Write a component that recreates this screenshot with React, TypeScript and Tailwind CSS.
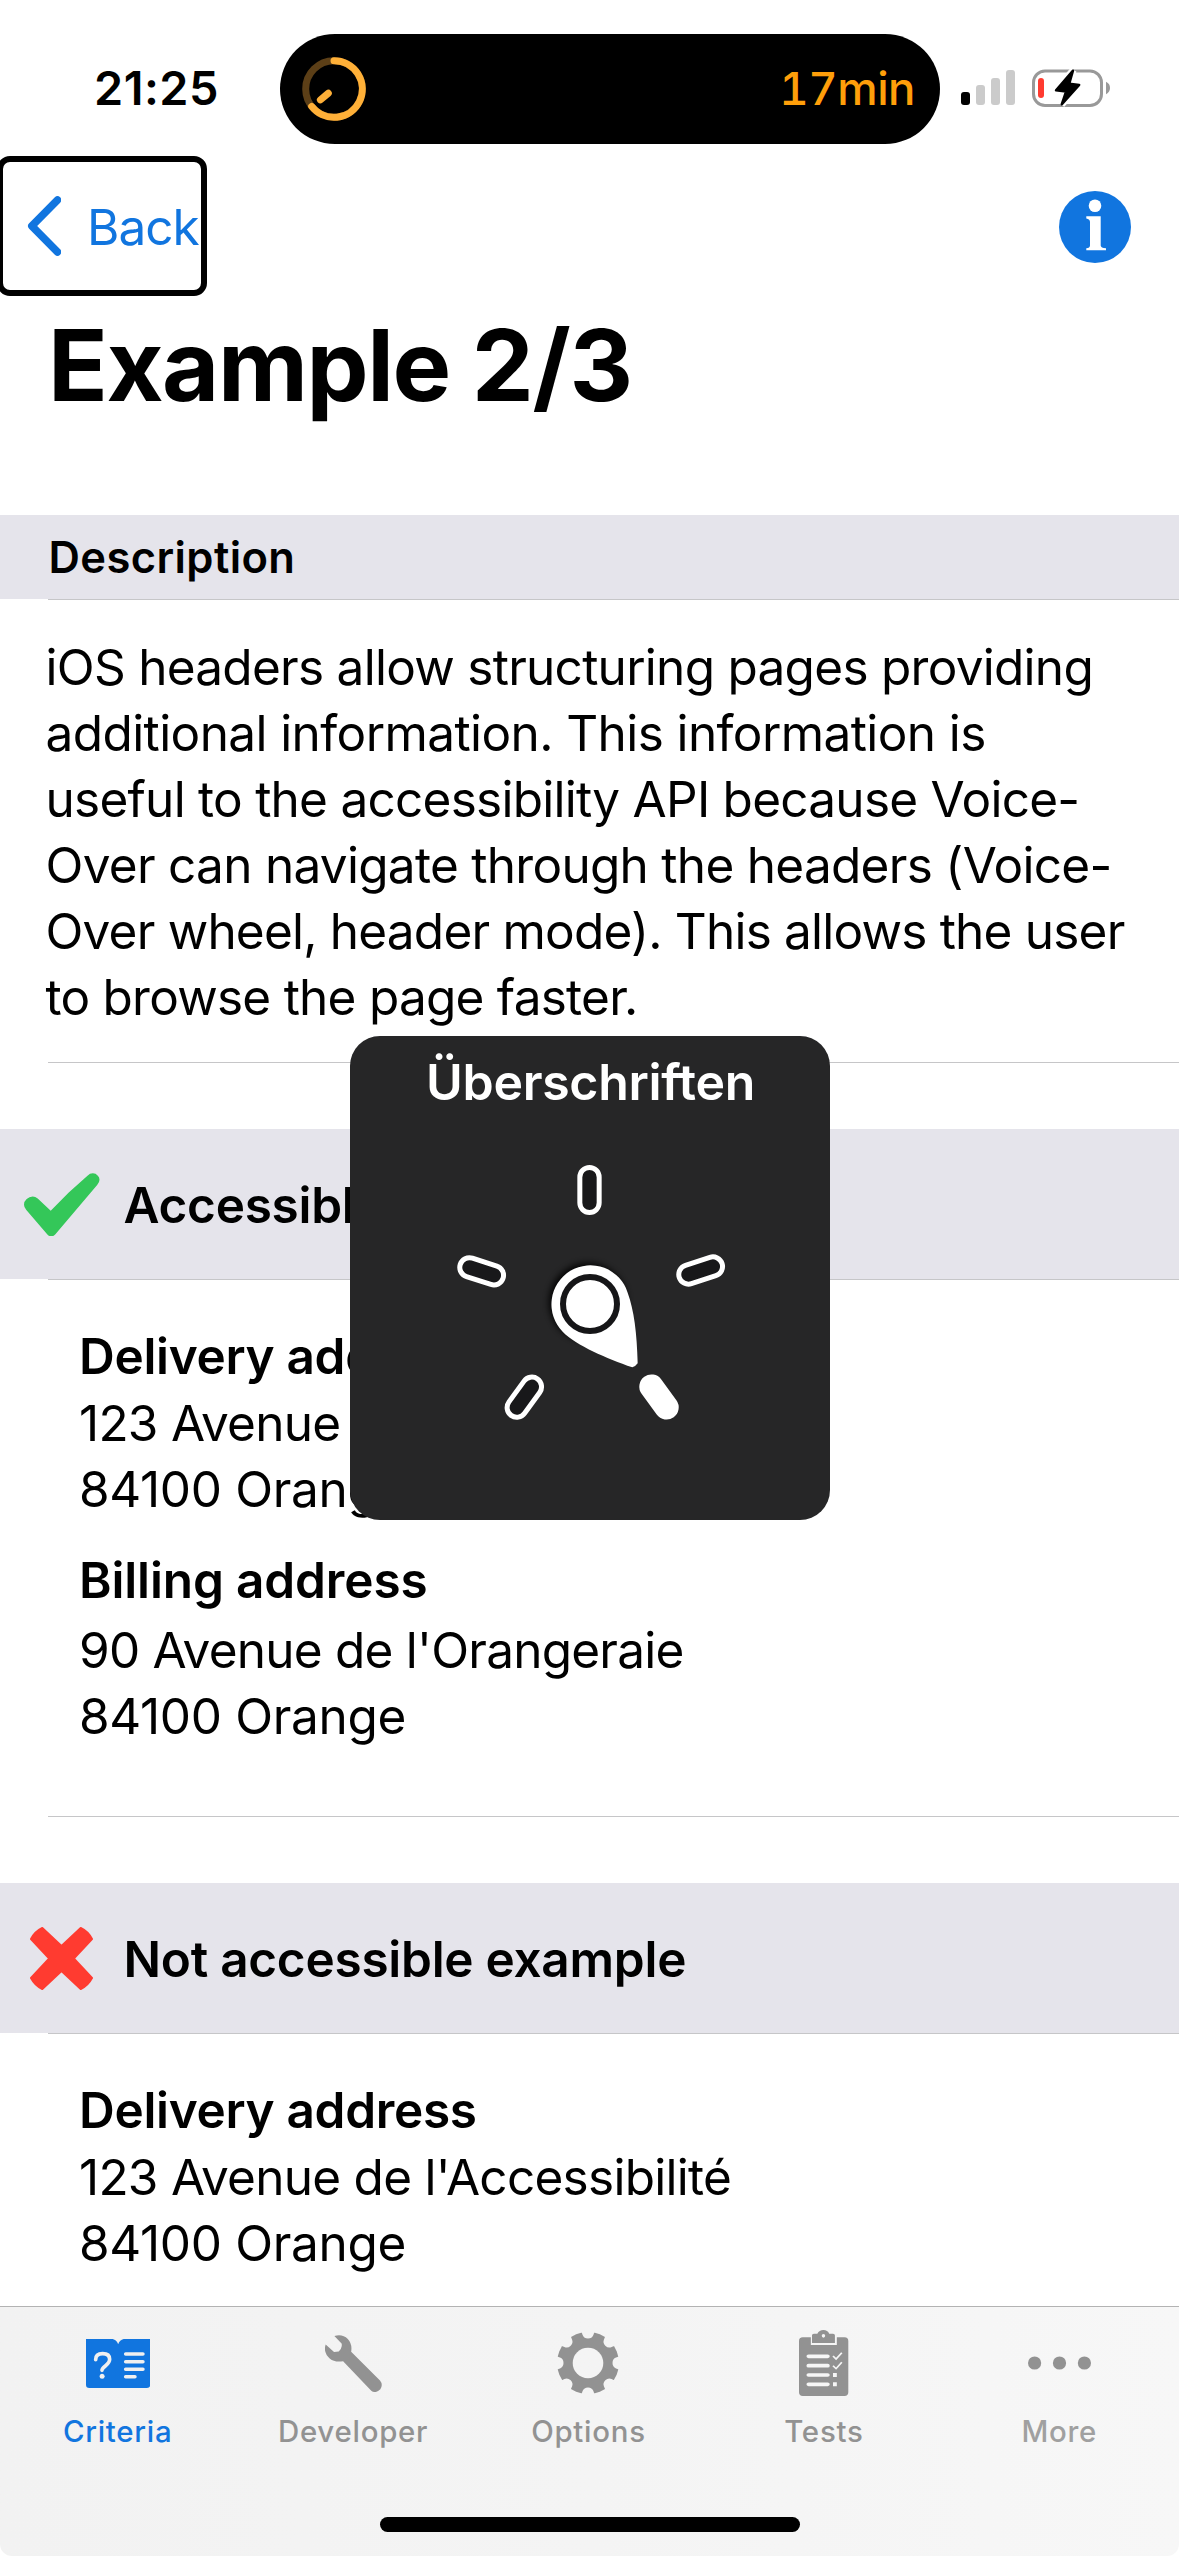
import React from 'react';

function TimerRing() {
  return (
    <svg width="66" height="66" viewBox="0 0 66 66" fill="none" strokeLinecap="round">
      <circle cx="33" cy="33" r="28.3" stroke="#5c3f17" strokeWidth="7" />
      <path d="M33 4.7A28.3 28.3 0 1 1 10.7 50.4" stroke="#ffb038" strokeWidth="7" />
      <path d="M27.3 37.3L19.4 43.9" stroke="#ffb038" strokeWidth="7" />
    </svg>
  );
}

function Signal() {
  return (
    <svg width="54" height="35" viewBox="0 0 54 35">
      <rect x="0" y="22" width="9" height="13" rx="3" fill="#000" />
      <rect x="15" y="15" width="9" height="20" rx="3" fill="#cbcbcb" />
      <rect x="30" y="8" width="9" height="27" rx="3" fill="#cbcbcb" />
      <rect x="45" y="0" width="9" height="35" rx="3" fill="#cbcbcb" />
    </svg>
  );
}

function Battery() {
  const bolt = 'M41 1.6L24 21.3L34 22.6L29.7 35.4L47.2 16L37.3 14.6Z';
  return (
    <svg width="78" height="39" viewBox="0 0 78 39" className="overflow-visible">
      <rect x="1.5" y="2" width="68" height="34.5" rx="11.5" fill="none" stroke="#999" strokeWidth="3" />
      <path d="M74 12.8V25.2C76.8 24 78 21.5 78 19C78 16.5 76.8 14 74 12.8Z" fill="#999" />
      <rect x="6" y="9" width="6" height="20" rx="3" fill="#ff3b30" />
      <path d={bolt} fill="#fff" stroke="#fff" strokeWidth="7" />
      <path d={bolt} fill="#000" stroke="#000" strokeWidth="2.4" strokeLinejoin="round" />
    </svg>
  );
}

function InfoIcon() {
  return (
    <svg width="72" height="72" viewBox="0 0 72 72">
      <circle cx="36" cy="36" r="36" fill="#1175df" />
      <circle cx="36" cy="14.8" r="6.3" fill="#fff" />
      <path d="M27.3 25.3H41.7V54.5Q41.7 57 47 57.3V59.2H27.3V57.3Q31 57 31 54.5V31Q31 28 27.3 27.5Z" fill="#fff" />
    </svg>
  );
}

function CheckIcon() {
  return (
    <svg width="75.5" height="63.5" viewBox="72 218 226 190" fill="#34c759">
      <path d="M98 288Q106 288 113 294L152 331L206 276L262 226Q269 219 278 219Q287 219 293 226Q298 231 298 238Q298 246 291 254L166 401Q160 408 154 408Q148 408 142 402L79 329Q72 321 72 313Q72 303 80 296Q88 288 98 288Z" />
    </svg>
  );
}

function CrossIcon() {
  return (
    <svg width="63" height="63" viewBox="0 0 63 63" fill="#ff3b30" stroke="#ff3b30" strokeWidth="2" strokeLinejoin="round" className="mr-px">
      <path d="M12.3 1L31.5 19L50.7 1Q58 4.5 62 12L43.8 31.5L62 51Q58 58.5 50.7 62L31.5 44L12.3 62Q5 58.5 1 51L19.2 31.5L1 12Q5 4.5 12.3 1Z" />
    </svg>
  );
}

function BookIcon() {
  return (
    <svg width="64.3" height="49" viewBox="0 0 193 147">
      <path d="M0 0H80Q92 3 96.5 16Q101 3 113 0H193V137Q193 147 183 147H10Q0 147 0 137Z" fill="#1175df" />
      <g stroke="#f0f0f0" fill="none" strokeLinecap="round">
        <path d="M29 62Q29 44 50 44Q71 44 71 61Q71 71 58 81Q48 89 48 94" strokeWidth="11" />
        <path d="M119 45H171M119 68H171M119 90.5H171M119 113H147" strokeWidth="10.5" />
      </g>
      <circle cx="48.5" cy="112" r="7.5" fill="#f0f0f0" />
    </svg>
  );
}

function WrenchIcon() {
  return (
    <svg width="57" height="57" viewBox="0 0 170 170" fill="#929292">
      <path d="M28 3Q52 -4 68 12Q82 27 78 50L164 136Q174 148 165 162Q152 176 138 166L54 78Q30 83 14 70Q-6 52 2 28L27 51L41 49Q49 42 50 33L50 26Z" />
    </svg>
  );
}

function GearIcon() {
  return (
    <svg width="62" height="62" viewBox="-31 -31 62 62">
      <mask id="gear-notches">
        <rect x="-31" y="-31" width="62" height="62" fill="#fff" />
        <circle r="15.3" fill="#000" />
        {[0, 45, 90, 135, 180, 225, 270, 315].map((a) => (
          <path key={a} transform={`rotate(${a})`} d="M-7.5 -32Q-5.8 -30 -5.4 -28Q-4 -24.5 0 -24.5Q4 -24.5 5.4 -28Q5.8 -30 7.5 -32Z" fill="#000" />
        ))}
      </mask>
      <circle r="31" fill="#929292" mask="url(#gear-notches)" />
    </svg>
  );
}

function ClipboardIcon() {
  return (
    <svg width="49.3" height="66" viewBox="573 122 129 198" preserveAspectRatio="none">
      <path d="M583 144H604V167H672V144H692Q702 144 702 155V309Q702 320 692 320H583Q573 320 573 309V155Q573 144 583 144Z" fill="#929292" />
      <path fillRule="evenodd" d="M607 161V138Q607 133 612 133H621Q626 122 637 122Q648 122 652 133H662Q667 133 667 138V161ZM637 134A4.5 5.5 0 1 0 637 145A4.5 5.5 0 1 0 637 134Z" fill="#929292" />
      <g stroke="#f6f6f6" fill="none">
        <path d="M598 201H648M598 229H648M598 257H648M598 285H648" strokeWidth="11" strokeLinecap="round" />
        <path d="M662 200L670 209L685 190M662 229L670 238L685 219" strokeWidth="4.5" />
      </g>
      <path d="M662 251H672V263H662ZM662 279H672V291H662Z" fill="#f6f6f6" />
    </svg>
  );
}

function MoreIcon() {
  return (
    <svg width="63" height="14" viewBox="0 0 63 14" fill="#929292">
      <circle cx="6.6" cy="7" r="6.6" />
      <circle cx="31.5" cy="7" r="6.6" />
      <circle cx="56.4" cy="7" r="6.6" />
    </svg>
  );
}

function Pill({ x, y, angle, filled }: { x: number; y: number; angle: number; filled?: boolean }) {
  return (
    <rect
      x="-29"
      y="-67.5"
      width="58"
      height="135"
      rx="29"
      transform={`translate(${x} ${y}) rotate(${angle})`}
      fill={filled ? '#fff' : '#18181a'}
      stroke="#fff"
      strokeWidth="15"
    />
  );
}

function Rotor() {
  return (
    <section className="absolute left-[350px] top-[1036px] h-[484px] w-[480px] overflow-hidden rounded-[30px] bg-[#262627] text-white">
      <h2 className="pt-[13px] pl-px text-center text-[50px] leading-[66px] font-semibold tracking-[-0.3px]">Überschriften</h2>
      <svg className="absolute inset-0" width="480" height="484" viewBox="30 48 1440 1452">
        <defs>
          <filter id="soft" x="-30%" y="-30%" width="160%" height="160%">
            <feGaussianBlur stdDeviation="9" />
          </filter>
        </defs>
        <Pill x={748.5} y={510} angle={0} />
        <Pill x={1082} y={751.5} angle={72} />
        <Pill x={425} y={754} angle={-72} />
        <Pill x={553} y={1131.5} angle={36} />
        <Pill x={957} y={1131} angle={-36} filled />
        <circle cx="744" cy="846" r="118" fill="#000" opacity="0.85" filter="url(#soft)" />
        <path d="M893 1030C891 940 882 870 863 818A117 117 0 1 0 668 935C710 978 800 1014 877 1042Q886 1040 893 1030Z" fill="#fff" />
        <circle cx="750" cy="852" r="81" fill="none" stroke="#161618" strokeWidth="18" />
      </svg>
    </section>
  );
}

function Rule() {
  return <div className="ml-12 h-px shrink-0 bg-[#c6c6c8]" />;
}

function ExampleHeader({ icon, title }: { icon: React.ReactNode; title: string }) {
  return (
    <>
      <div className="flex h-[150px] shrink-0 items-center bg-[#e5e4eb]">
        <div className="flex w-[123.5px] shrink-0 justify-center pt-px">{icon}</div>
        <h2 className="pt-[2px] text-[49.5px] leading-[66px] font-semibold tracking-[-0.26px] whitespace-nowrap">{title}</h2>
      </div>
      <Rule />
    </>
  );
}

function Delivery() {
  return (
    <div className="pt-[43px]">
      <h3 className="font-semibold tracking-[-0.32px]">Delivery address</h3>
      <p className="mt-px tracking-[-0.73px]">123 Avenue de l'Accessibilité</p>
      <p className="tracking-[-0.32px]">84100 Orange</p>
    </div>
  );
}

const tabs = [
  { label: 'Criteria', icon: <BookIcon />, color: 'text-[#1175df]' },
  { label: 'Developer', icon: <WrenchIcon />, color: 'text-[#929292]' },
  { label: 'Options', icon: <GearIcon />, color: 'text-[#929292]' },
  { label: 'Tests', icon: <ClipboardIcon />, color: 'text-[#929292]' },
  { label: 'More', icon: <MoreIcon />, color: 'text-[#a0a0a0]' },
];

export default function App() {
  return (
    <div className="relative flex h-[2556px] w-[1179px] flex-col overflow-hidden bg-white font-['Inter',sans-serif] text-black">
      <header className="flex h-[156px] shrink-0 pt-[34px]">
        <div className="w-[280px] pt-[21px] pl-[94px] text-[46.8px] leading-[66px] font-semibold tracking-[0.5px]">21:25</div>
        <div className="flex h-[110px] w-[660px] items-center justify-between rounded-full bg-black pr-[25px] pl-[21px]">
          <TimerRing />
          <span className="pb-px text-[45.5px] leading-[66px] font-medium tracking-[-0.5px] text-[#ff9f0a] tabular-nums">17min</span>
        </div>
        <div className="flex pt-[35px] pl-[21px]">
          <div className="pt-px"><Signal /></div>
          <div className="pl-[17px]"><Battery /></div>
        </div>
      </header>

      <nav className="flex h-[140px] shrink-0 items-center justify-between pr-12">
        <button className="-ml-[3px] flex h-[140px] w-[210px] items-center rounded-[13px] border-[6px] border-black pl-[22px] text-[49.5px] leading-[66px] tracking-[-1px] text-[#1175df]">
          <svg width="36" height="60" viewBox="0 0 36 60" fill="none" stroke="#1175df" strokeWidth="7.5" strokeLinecap="round" strokeLinejoin="round">
            <path d="M32.5 4L6.8 30L32.5 56" />
          </svg>
          <span className="pt-px pl-[26px]">Back</span>
        </button>
        <div className="pt-[2px]"><InfoIcon /></div>
      </nav>

      <main className="flex min-h-0 flex-1 flex-col overflow-hidden">
        <h1 className="h-[219px] shrink-0 pt-[9px] pl-[48px] text-[98.6px] leading-[120px] font-bold tracking-[-1.4px]">Example 2/3</h1>
        <div className="flex h-[84px] shrink-0 items-center bg-[#e5e4eb] pt-px pl-[48.5px] text-[43.5px] font-semibold tracking-[0.4px]">Description</div>
        <Rule />
        <div className="shrink-0 pt-[34px] pb-[32px] pl-[45.5px] text-[49.5px] leading-[66px] whitespace-nowrap">
          <p className="tracking-[-0.723px]">iOS headers allow structuring pages providing</p>
          <p className="tracking-[-0.59px]">additional information. This information is</p>
          <p className="tracking-[-0.744px]">useful to the accessibility API because Voice-</p>
          <p className="tracking-[-0.713px]">Over can navigate through the headers (Voice-</p>
          <p className="tracking-[-0.789px]">Over wheel, header mode). This allows the user</p>
          <p className="tracking-[-0.75px]">to browse the page faster.</p>
        </div>
        <Rule />
        <div className="h-[66px] shrink-0" />
        <ExampleHeader icon={<CheckIcon />} title="Accessible example" />
        <div className="h-[536px] shrink-0 pl-[79px] text-[49.5px] leading-[66px]">
          <Delivery />
          <h3 className="mt-[25px] font-semibold tracking-[-0.14px]">Billing address</h3>
          <p className="mt-1 tracking-[-0.76px]">90 Avenue de l'Orangeraie</p>
          <p className="tracking-[-0.32px]">84100 Orange</p>
        </div>
        <Rule />
        <div className="h-[66px] shrink-0" />
        <ExampleHeader icon={<CrossIcon />} title="Not accessible example" />
        <div className="shrink-0 pl-[79px] text-[49.5px] leading-[66px]">
          <Delivery />
        </div>
      </main>

      <footer className="flex h-[250px] shrink-0 flex-col rounded-b-[12px] border-t border-[#b3b3b3] bg-linear-to-r from-[#f2f2f2] via-[#f4f4f4] to-[#f7f7f7]">
        <div className="grid w-[1177px] grid-cols-5">
          {tabs.map((t) => (
            <div key={t.label} className="flex flex-col items-center pt-[14px]">
              <div className="flex h-[84px] items-center">{t.icon}</div>
              <span className={`pt-[7px] text-[29.4px] leading-[40px] font-medium tracking-[0.76px] ${t.color}`}>{t.label}</span>
            </div>
          ))}
        </div>
        <div className="mx-auto mt-auto mb-6 h-[15px] w-[420px] rounded-full bg-black" />
      </footer>

      <Rotor />
    </div>
  );
}
